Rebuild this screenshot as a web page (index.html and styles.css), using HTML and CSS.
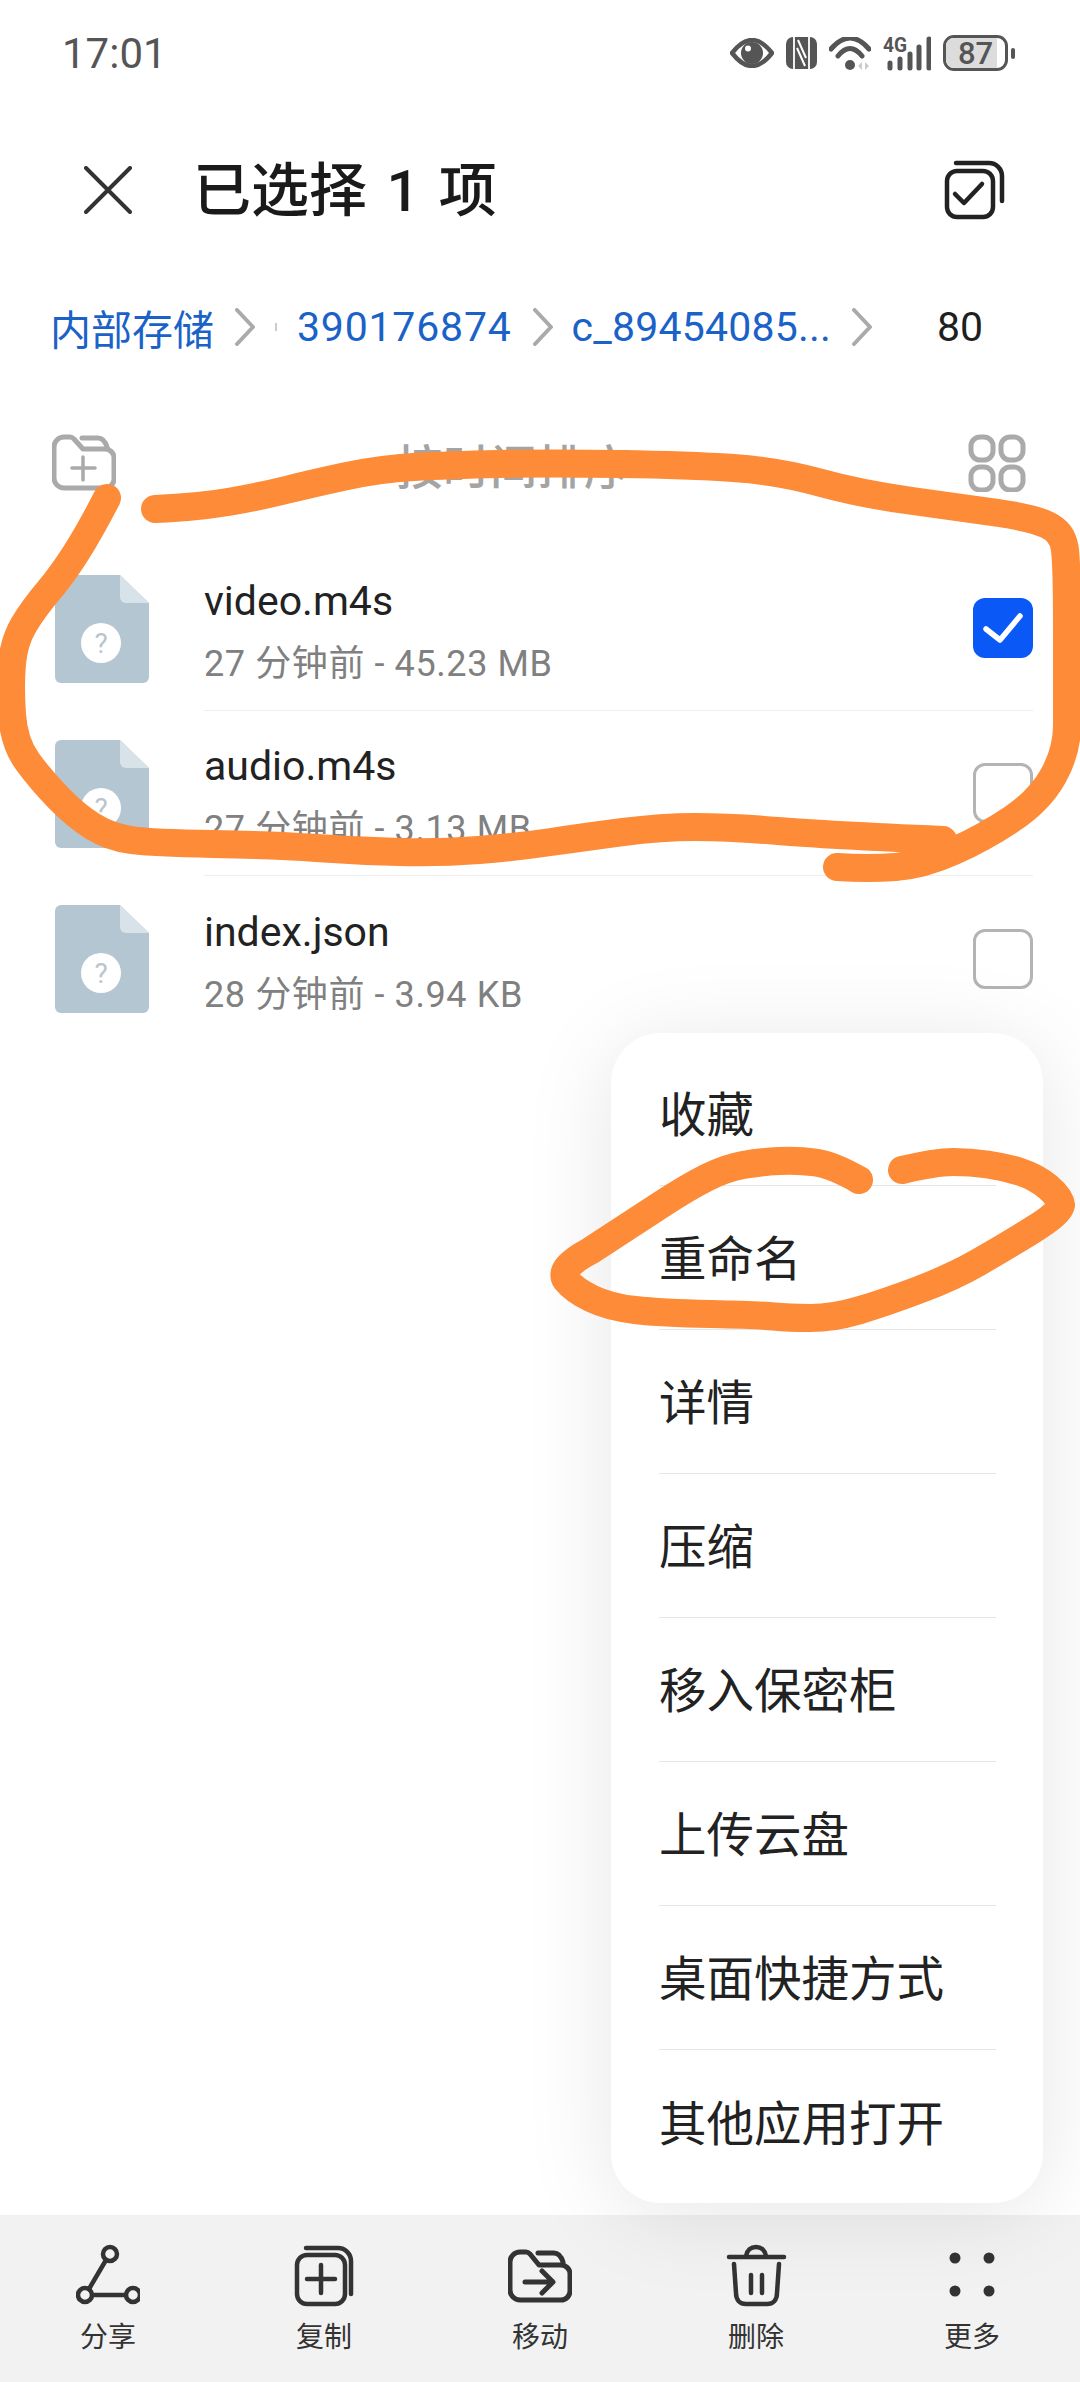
FILE: index.html
```html
<!DOCTYPE html>
<html lang="zh-CN">
<head>
    <meta charset="UTF-8">
    <meta name="viewport" content="width=device-width, initial-scale=1.0">
    <title>已选择 1 项</title>
    <link rel="stylesheet" href="styles.css">
</head>
<body>
    <svg class="defs">
        <symbol id="file" viewBox="0 0 94 108">
            <path d="M6 0h59l29 28v74a6 6 0 0 1-6 6H6a6 6 0 0 1-6-6V6a6 6 0 0 1 6-6z" fill="#b5c6d3"/>
            <path d="M65 0l29 28H71a6 6 0 0 1-6-6z" fill="#d8e2e9"/>
            <circle cx="46" cy="68" r="20" fill="#fff"/>
            <text x="46" y="78" text-anchor="middle" font-size="28" fill="#b9c5ce" font-family="Roboto, sans-serif">?</text>
        </symbol>
    </svg>

    <div class="page">
        <div class="status-bar">
            <span class="time">17:01</span>
            <div class="status-icons">
                <svg width="44" height="30" viewBox="0 0 44 30">
                    <path d="M2 15C9 6 15 2 22 2s13 4 20 13c-7 9-13 13-20 13S9 24 2 15z" fill="none" stroke="#555" stroke-width="4.500" stroke-linejoin="round"/>
                    <circle cx="22" cy="15" r="11" fill="#555"/>
                    <circle cx="18" cy="10.500" r="3" fill="#fff"/>
                </svg>
                <svg width="31" height="32" viewBox="0 0 31 32">
                    <rect width="31" height="32" rx="7" fill="#555"/>
                    <path d="M8 0v32M23 0v32" stroke="#fff" stroke-width="1.800"/>
                    <path d="M12 3l8 18M11 11l8 18" stroke="#fff" stroke-width="2" fill="none"/>
                </svg>
                <svg width="42" height="33" viewBox="0 0 42 33">
                    <path d="M2 12Q21-10 40 12M9 19Q21 4 33 19" fill="none" stroke="#555" stroke-width="5" stroke-linecap="round"/>
                    <circle cx="21" cy="28" r="5" fill="#555"/>
                    <path d="M33 25l-4 4 4 4zM36 25l4 4-4 4z" fill="#ccc"/>
                </svg>
                <svg width="48" height="43" viewBox="0 -5 48 43">
                    <text x="0" y="15" font-size="20" font-weight="700" fill="#555" font-family="Roboto, sans-serif" textLength="24" lengthAdjust="spacingAndGlyphs">4G</text>
                    <path d="M7 26v5M17 22v9M27 17v14M36 10v21M46 2v29" stroke="#555" stroke-width="5" stroke-linecap="round"/>
                </svg>
                <div class="battery">
                    <div class="battery-box">
                        <div class="battery-fill" style="width: 87%"></div>
                        <span class="battery-text">87</span>
                    </div>
                    <div class="battery-tip"></div>
                </div>
            </div>
        </div>

        <div class="top-bar">
            <svg class="close-icon" width="48" height="48" viewBox="0 0 48 48">
                <path d="M2 2l44 44M46 2L2 46" stroke="#333" stroke-width="4" stroke-linecap="round"/>
            </svg>
            <h1 class="title">已选择 1 项</h1>
            <svg class="select-all" width="64" height="64" viewBox="0 0 64 64" fill="none" stroke="#222" stroke-width="4.500" stroke-linecap="round" stroke-linejoin="round">
                <rect x="6" y="13" width="46" height="46" rx="10"/>
                <path d="M15 5h33a13 13 0 0 1 13 13v25"/>
                <path d="M14 36l9 9 18-19"/>
            </svg>
        </div>

        <div class="crumbs">
            <a class="crumb">内部存储</a>
            <svg class="chevron" width="22" height="38" viewBox="0 0 22 38"><path d="M3 2l16 17L3 36"/></svg>
            <span class="crumb-mark"></span>
            <a class="crumb crumb-id">390176874</a>
            <svg class="chevron" width="22" height="38" viewBox="0 0 22 38"><path d="M3 2l16 17L3 36"/></svg>
            <a class="crumb crumb-name">c_89454085...</a>
            <svg class="chevron" width="22" height="38" viewBox="0 0 22 38"><path d="M3 2l16 17L3 36"/></svg>
            <span class="crumb-current">80</span>
        </div>

        <div class="sort-row">
            <svg width="64" height="64" viewBox="0 0 64 64" fill="none" stroke="#aaa" stroke-width="5" stroke-linecap="round" stroke-linejoin="round">
                <path d="M2 16a10 10 0 0 1 10-10h6c2 0 3 1 4 2l9 10h22a9 9 0 0 1 9 9v21a9 9 0 0 1-9 9H12a10 10 0 0 1-10-10z"/>
                <path d="M30 7h16c4 0 7 3 9 9"/>
                <path d="M20 37h23M31 26v23" stroke-width="3.500"/>
            </svg>
            <span class="sort-label">按时间排序</span>
            <svg width="58" height="58" viewBox="0 0 58 58" fill="none" stroke="#aaa" stroke-width="5">
                <rect x="3" y="3" width="22" height="23" rx="9"/>
                <rect x="33" y="3" width="22" height="23" rx="9"/>
                <rect x="3" y="33" width="22" height="23" rx="9"/>
                <rect x="33" y="33" width="22" height="23" rx="9"/>
            </svg>
        </div>

        <div class="file-list">
            <div class="file-row">
                <svg class="file-icon" width="94" height="108"><use href="#file"/></svg>
                <div class="file-body">
                    <div class="file-info">
                        <div class="file-name">video.m4s</div>
                        <div class="file-meta">27 分钟前 - 45.23 MB</div>
                    </div>
                    <div class="check check-on">
                        <svg width="60" height="60" viewBox="0 0 60 60"><path d="M13 31l14 11 20-24" fill="none" stroke="#fff" stroke-width="5.500" stroke-linecap="round" stroke-linejoin="round"/></svg>
                    </div>
                </div>
            </div>
            <div class="file-row">
                <svg class="file-icon" width="94" height="108"><use href="#file"/></svg>
                <div class="file-body">
                    <div class="file-info">
                        <div class="file-name">audio.m4s</div>
                        <div class="file-meta">27 分钟前 - 3.13 MB</div>
                    </div>
                    <div class="check"></div>
                </div>
            </div>
            <div class="file-row file-row-last">
                <svg class="file-icon" width="94" height="108"><use href="#file"/></svg>
                <div class="file-body">
                    <div class="file-info">
                        <div class="file-name">index.json</div>
                        <div class="file-meta">28 分钟前 - 3.94 KB</div>
                    </div>
                    <div class="check"></div>
                </div>
            </div>
        </div>

        <div class="toolbar">
            <div class="tool">
                <svg width="64" height="64" viewBox="0 0 64 64" fill="none" stroke="#333" stroke-width="4.500" stroke-linecap="round">
                    <circle cx="34" cy="10" r="7"/>
                    <circle cx="9" cy="51" r="7"/>
                    <circle cx="57" cy="51" r="7"/>
                    <path d="M30 16L13 45M16 51h34"/>
                </svg>
                <span>分享</span>
            </div>
            <div class="tool">
                <svg width="64" height="64" viewBox="0 0 64 64" fill="none" stroke="#333" stroke-width="4.500" stroke-linecap="round" stroke-linejoin="round">
                    <rect x="5" y="11" width="48" height="49" rx="10"/>
                    <path d="M14 4h32a13 13 0 0 1 13 13v33"/>
                    <path d="M15 35h28M29 21v28"/>
                </svg>
                <span>复制</span>
            </div>
            <div class="tool">
                <svg width="64" height="64" viewBox="0 0 64 64" fill="none" stroke="#333" stroke-width="5" stroke-linecap="round" stroke-linejoin="round">
                    <path d="M2 18a10 10 0 0 1 10-10h6c2 0 3 1 4 2l9 11h22a9 9 0 0 1 9 9v17a9 9 0 0 1-9 9H12a10 10 0 0 1-10-10z"/>
                    <path d="M30 9h16c4 0 7 3 9 9"/>
                    <path d="M17 38h27M34 27l11 11-11 11"/>
                </svg>
                <span>移动</span>
            </div>
            <div class="tool">
                <svg width="64" height="64" viewBox="0 0 64 64" fill="none" stroke="#333" stroke-width="4.500" stroke-linecap="round" stroke-linejoin="round">
                    <path d="M5 13h55"/>
                    <path d="M22 12c1-6 5-9 10-9s9 3 10 9" />
                    <path d="M10 20l2 29c0 7 4 11 10 11h21c6 0 10-4 10-11l2-29"/>
                    <path d="M27 31v18M38 31v18"/>
                </svg>
                <span>删除</span>
            </div>
            <div class="tool">
                <svg width="64" height="64" viewBox="0 0 64 64" fill="#333">
                    <circle cx="15" cy="14" r="5.500"/>
                    <circle cx="49" cy="14" r="5.500"/>
                    <circle cx="15" cy="47" r="5.500"/>
                    <circle cx="49" cy="47" r="5.500"/>
                </svg>
                <span>更多</span>
            </div>
        </div>

        <ul class="menu">
            <li>收藏</li>
            <li>重命名</li>
            <li>详情</li>
            <li>压缩</li>
            <li>移入保密柜</li>
            <li>上传云盘</li>
            <li>桌面快捷方式</li>
            <li>其他应用打开</li>
        </ul>

        <!-- orange marks drawn over the screenshot -->
        <svg class="scribble" width="1080" height="2382" viewBox="0 0 1080 2382">
            <path d="M155 509Q200 507 231 501.500Q262 496 286 490Q310 484 344.500 476.500Q379 469 413.500 467Q448 465 499.500 464Q551 463 620 464Q689 465 733.500 468Q778 471 819.500 482.500Q861 494 912.500 501Q964 508 998.500 513Q1033 518 1047.500 525Q1062 532 1064.500 547Q1067 560 1067 630Q1067 700 1067 725.500Q1067 751 1053.500 775.500Q1040 800 1012.500 818.500Q985 837 954 851Q923 865 895.500 867Q868 869 837 867"/>
            <path d="M107 498Q90 531 76 553Q62 575 48 591.500Q34 608 24 624.500Q14 641 12 663.500Q10 686 12 714.500Q14 743 27.500 761.500Q41 780 58.500 798Q76 816 93 826.500Q110 837 131 840Q152 843 213.500 844Q275 845 316.500 848Q358 851 399.500 852Q441 853 479 850Q517 847 551 842Q585 837 623 832Q661 827 695.500 827Q730 827 778 831Q826 835 943 840"/>
            <path d="M859 1180Q833 1165 815.500 1162.500Q798 1160 779 1161Q760 1162 743 1165Q726 1168 707 1177.500Q688 1187 660.500 1205Q633 1223 590 1251Q558 1268 566 1280Q574 1290 591.500 1298.500Q609 1307 635 1310Q661 1313 710.500 1314Q760 1315 774 1316.500Q788 1318 810.500 1318Q833 1318 858.500 1310.500Q884 1303 918.500 1290Q953 1277 979 1262Q1005 1247 1032.500 1230Q1060 1213 1061 1205Q1060 1197 1048 1187Q1036 1177 1020.500 1172Q1005 1167 987.500 1164.500Q970 1162 953 1162Q936 1162 902 1170"/>
        </svg>
    </div>
</body>
</html>
```

FILE: styles.css
```css
* {
    box-sizing: border-box;
}
body {
    margin: 0;
    background-color: #fff;
    font-family: Roboto, "Noto Sans CJK SC", sans-serif;
    color: #1f1f1f;
}
.defs {
    display: none;
}
.page {
    position: relative;
    width: 1080px;
    height: 2382px;
    display: flex;
    flex-direction: column;
    overflow: hidden;
}

/* status bar */
.status-bar {
    height: 106px;
    padding: 0 65px 0 62px;
    display: flex;
    justify-content: space-between;
    align-items: center;
}
.time {
    font-size: 42px;
    color: #555;
}
.status-icons {
    display: flex;
    align-items: center;
    gap: 12px;
}
.battery {
    display: flex;
    align-items: center;
    gap: 3px;
}
.battery-box {
    position: relative;
    width: 65px;
    height: 36px;
    border: 3px solid #555;
    border-radius: 11px;
    overflow: hidden;
}
.battery-fill {
    height: 100%;
    background-color: #dcdcdc;
}
.battery-text {
    position: absolute;
    inset: 0;
    display: flex;
    align-items: center;
    justify-content: center;
    font-size: 31px;
    font-weight: 500;
    color: #555;
}
.battery-tip {
    width: 4px;
    height: 11px;
    border-radius: 2px;
    background-color: #555;
}

/* title */
.top-bar {
    height: 168px;
    padding: 0 75px 0 84px;
    display: flex;
    align-items: center;
}
.close-icon {
    margin-right: 61px;
}
.title {
    flex: 1;
    margin: 0;
    padding-bottom: 8px;
    font-size: 58px;
    font-weight: 500;
    word-spacing: 5px;
    color: #1a1a1a;
}

/* path */
.crumbs {
    height: 106px;
    padding-left: 50px;
    display: flex;
    align-items: center;
}
.crumb {
    font-size: 41px;
    color: #1a62c8;
}
.chevron {
    fill: none;
    stroke: #aaa;
    stroke-width: 4;
    stroke-linecap: round;
    stroke-linejoin: round;
    margin-left: 20px;
}
.crumb-mark {
    width: 2px;
    height: 8px;
    margin-left: 19px;
    background-color: #ccc;
}
.crumb-id {
    margin-left: 20px;
    letter-spacing: 0.8px;
}
.crumb-name {
    margin-left: 18px;
    letter-spacing: 0.2px;
}
.crumb-current {
    margin-left: 64px;
    font-size: 41px;
    color: #1f1f1f;
}

/* sort */
.sort-row {
    height: 166px;
    padding: 0 54px 0 52px;
    display: flex;
    align-items: center;
}
.sort-label {
    flex: 1;
    padding-left: 280px;
    font-size: 47px;
    font-weight: 500;
    color: #a4a4a4;
}

/* files */
.file-row {
    height: 165px;
    padding: 0 47px 0 55px;
    display: flex;
    align-items: center;
}
.file-icon {
    flex: none;
    margin-right: 55px;
}
.file-body {
    flex: 1;
    height: 100%;
    padding-top: 7px;
    display: flex;
    align-items: center;
    justify-content: space-between;
    border-bottom: 1px solid #eee;
}
.file-row-last .file-body {
    border-bottom: none;
}
.file-name {
    font-size: 41px;
    line-height: 52px;
    color: #222;
}
.file-meta {
    margin-top: 13px;
    font-size: 36px;
    line-height: 48px;
    letter-spacing: 0.6px;
    color: #808080;
}
.check {
    width: 60px;
    height: 60px;
    margin-bottom: 7px;
    border: 3px solid #b4b4b4;
    border-radius: 12px;
}
.check-on {
    border: none;
    background-color: #0a59f7;
}

/* bottom actions */
.toolbar {
    margin-top: auto;
    height: 167px;
    padding-top: 29px;
    display: grid;
    grid-template-columns: repeat(5, 216px);
    background-color: #f2f2f2;
}
.tool {
    display: flex;
    flex-direction: column;
    align-items: center;
}
.tool span {
    margin-top: 10px;
    font-size: 28px;
    line-height: 40px;
    color: #333;
}

/* popup menu */
.menu {
    position: absolute;
    top: 1033px;
    left: 611px;
    width: 432px;
    height: 1170px;
    margin: 0;
    padding: 9px 47px 9px 48px;
    list-style: none;
    background-color: #fff;
    border-radius: 50px;
    box-shadow: 0 10px 90px rgba(0, 0, 0, 0.1);
}
.menu li {
    height: 144px;
    padding-bottom: 4px;
    display: flex;
    align-items: center;
    font-size: 47.5px;
    color: #222;
    border-bottom: 1px solid #e6e6e6;
}
.menu li:last-child {
    border-bottom: none;
}

.scribble {
    position: absolute;
    top: 0;
    left: 0;
    fill: none;
    stroke: #fd8b38;
    stroke-width: 28;
    stroke-linecap: round;
    stroke-linejoin: round;
    pointer-events: none;
}
```
